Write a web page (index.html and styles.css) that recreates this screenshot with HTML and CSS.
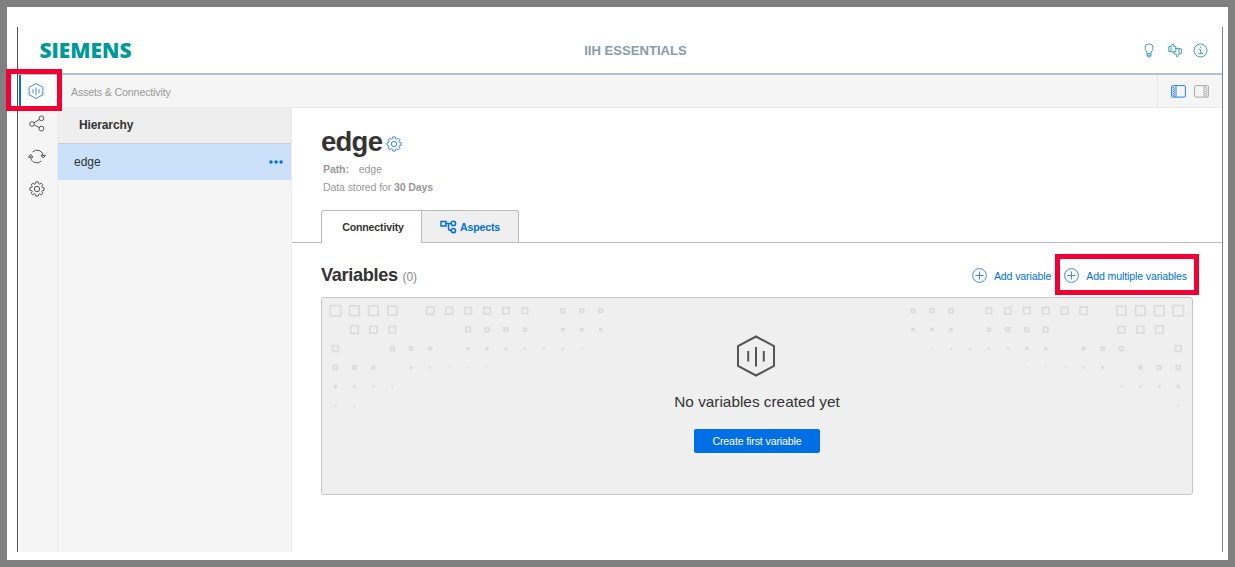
FILE: index.html
```html
<!DOCTYPE html>
<html lang="en">
<head>
<meta charset="utf-8">
<title>IIH Essentials</title>
<link rel="stylesheet" href="styles.css">
</head>
<body>
<svg class="defs" width="0" height="0" aria-hidden="true">
  <symbol id="hex" viewBox="0 0 40 42"><path d="M20 1.5 38 11.2V31L20 40.5 2 31V11.2Z"/><path d="M20 12V31.500M12.200 16V26.500M27.800 16V26.500"/></symbol>
  <symbol id="gear" viewBox="0 0 16 16"><path d="M6.400 2.700 6.800 .9H9.200L9.600 2.700 10.700 3.200 12.300 2.200 13.800 3.700 12.800 5.300 13.300 6.400 15.100 6.800V9.200L13.300 9.600 12.800 10.700 13.800 12.300 12.300 13.800 10.700 12.800 9.600 13.300 9.200 15.100H6.800L6.400 13.300 5.300 12.800 3.700 13.800 2.200 12.300 3.200 10.700 2.700 9.600 .9 9.200V6.800L2.700 6.400 3.200 5.300 2.200 3.700 3.700 2.200 5.300 3.200Z"/><circle cx="8" cy="8" r="2.700"/></symbol>
  <symbol id="plus" viewBox="0 0 15 15"><circle cx="7.500" cy="7.500" r="6.900"/><path d="M7.500 3.500V11.500M3.500 7.500H11.500"/></symbol>
</svg>
<div class="app">
  <header class="header">
    <svg class="brand" width="100" height="24" viewBox="0 0 100 24"><text x="0.500" y="19.500" textLength="92" lengthAdjust="spacingAndGlyphs">SIEMENS</text></svg>
    <h1 class="product">IIH ESSENTIALS</h1>
    <div class="tools">
      <svg width="10" height="15" viewBox="0 0 10 15"><path d="M3 10.500C3 8.500 1 7.500 1 4.800a4 4 0 0 1 8 0C9 7.500 7 8.500 7 10.500ZM3 10.500V12.500L4 14H6L7 12.500V10.500M3 12.300H7"/></svg>
      <svg width="14" height="15" viewBox="0 0 14 15"><path d="M.8 3.500H3L5 .8 6 1.500 5.600 3.600H7.800V8.500L3.500 9 2.800 8.500H.8ZM3 3.500V8.500M7.800 5.500 11 5.300 13.300 6V10.800H11.200L9.500 13.800 8.300 13.200V11H6.200L5.700 8.800M11 5.500V10.800"/></svg>
      <svg width="15" height="15" viewBox="0 0 15 15"><circle cx="7.500" cy="7.500" r="6.500"/><path d="M5.700 6.300H7.700V10.500M5.300 10.600H10M7.400 3.600V4.900"/></svg>
    </div>
  </header>
  <div class="body">
    <nav class="rail">
      <span class="rail-item active"><svg width="16" height="16"><use href="#hex"/></svg></span>
      <span class="rail-item"><svg width="16" height="17" viewBox="0 0 16 17"><circle cx="3" cy="9" r="2.300"/><circle cx="12.400" cy="3.300" r="2.400"/><circle cx="12.400" cy="13.600" r="2.400"/><path d="M5 7.800 10.300 4.500M5.200 9.800 10.200 12.600"/></svg></span>
      <span class="rail-item"><svg width="18" height="15" viewBox="0 0 18 15"><path d="M4.600 3A6.200 6.200 0 0 1 15.200 7M13.400 12A6.200 6.200 0 0 1 2.700 7.500"/><path class="solid" d="M13 6.300H17.500L15.200 9ZM.5 8.200H5L2.700 5.300Z"/></svg></span>
      <span class="rail-item"><svg width="16" height="16"><use href="#gear"/></svg></span>
    </nav>
    <div class="workspace">
      <div class="crumbs">
        <span class="crumb">Assets &amp; Connectivity</span>
        <div class="panes">
          <svg class="pane-on" width="15" height="13" viewBox="0 0 15 13"><rect x=".6" y=".6" width="13.800" height="11.500" rx="1"/><path d="M5 .6V12M1.500 2 4 3.500M1.500 4 4 5.500M1.500 6 4 7.500M1.500 8 4 9.500M1.500 10 4 11.500"/></svg>
          <svg class="pane-off" width="15" height="13" viewBox="0 0 15 13"><rect x=".6" y=".6" width="13.800" height="11.500" rx="1"/><path d="M10 .6V12M11 2 13.500 3.500M11 4 13.500 5.500M11 6 13.500 7.500M11 8 13.500 9.500M11 10 13.500 11.500"/></svg>
        </div>
      </div>
      <div class="columns">
        <aside class="tree">
          <h2 class="tree-title">Hierarchy</h2>
          <div class="tree-row"><span>edge</span><svg width="14" height="4" viewBox="0 0 14 4"><circle cx="2" cy="2" r="1.700"/><circle cx="7.100" cy="2" r="1.700"/><circle cx="12.100" cy="2" r="1.700"/></svg></div>
        </aside>
        <main class="main">
          <div class="asset"><h2 class="asset-name">edge</h2><svg width="16" height="16"><use href="#gear"/></svg></div>
          <p class="meta"><b>Path:</b><span class="path">edge</span></p>
          <p class="meta">Data stored for <b>30 Days</b></p>
          <div class="tabs">
            <div class="tab selected">Connectivity</div>
            <div class="tab"><svg width="17" height="14" viewBox="0 0 17 14"><path d="M1 1.500H6V6H1ZM6 3.500H11M8.500 3.500V8.500Q8.500 10.500 11 10.500"/><circle cx="13.400" cy="3.400" r="2.200"/><circle cx="13.400" cy="10.600" r="2.200"/></svg>Aspects</div>
          </div>
          <section class="variables">
            <div class="section-head">
              <h3 class="section-title">Variables <span class="count">(0)</span></h3>
              <div class="actions">
                <span class="action"><svg width="15" height="15"><use href="#plus"/></svg>Add variable</span>
                <span class="action"><svg width="15" height="15"><use href="#plus"/></svg>Add multiple variables</span>
              </div>
            </div>
            <div class="empty">
              <svg class="pattern" width="870" height="196" viewBox="322 298 870 196"><g id="dots"></g><use href="#dots" transform="translate(1513.800 0) scale(-1 1)"/></svg>
              <svg class="empty-icon" width="40" height="42"><use href="#hex"/></svg>
              <p class="empty-text">No variables created yet</p>
              <button class="primary">Create first variable</button>
            </div>
          </section>
        </main>
      </div>
    </div>
  </div>
</div>
<div class="mark mark-nav"></div>
<div class="mark mark-add"></div>
<script src="pattern.js"></script>
</body>
</html>
```
FILE: pattern.js
```js
// Square sizes by row; 0 leaves the cell empty.
const rows = [
  [12, 11.4, 11.2, 10.7, 0, 9, 8.4, 8.3, 8.2, 8, 7.2, 0, 5.4, 5.2, 5],
  [0, 9.2, 8.7, 8.2, 0, 0, 0, 6.2, 5.4, 5.2, 4.7, 0, 3.6, 3.6, 3.4],
  [7.4, 0, 0, 5.4, 4.7, 4.2, 0, 3.2, 3.2, 2.7, 2.3, 2.2, 2.1, 1.8],
  [5.4, 4.9, 4.2, 0, 2.7, 2, 1.3, 1.2, 1.1],
  [3.2, 2.6, 2.2, 1.7, 0, 0, 0.8],
  [1.7, 1.2, 0.9]
];
const dots = document.getElementById("dots");
rows.forEach((row, r) => row.forEach((size, c) => {
  if (!size) return;
  const rect = document.createElementNS("http://www.w3.org/2000/svg", "rect");
  const stroke = Math.min(1.7, size / 2);
  const side = size - stroke;
  rect.setAttribute("x", 335.5 + c * 18.94 - side / 2);
  rect.setAttribute("y", 310.7 + r * 18.94 - side / 2);
  rect.setAttribute("width", side);
  rect.setAttribute("height", side);
  rect.setAttribute("stroke-width", stroke);
  dots.appendChild(rect);
}));
```
FILE: styles.css
```css
* { box-sizing: border-box; }
body {
  margin: 0;
  height: 567px;
  overflow: hidden;
  padding: 20px 5px 8px 10px;
  border: 7px solid #808080;
  background: #fff;
  font-family: "Liberation Sans", Arial, sans-serif;
  font-size: 10.6px;
  letter-spacing: -.13px;
  color: #333;
}
h1, h2, h3, p { margin: 0; }
svg { display: block; flex: none; fill: none; stroke: currentColor; }
.defs { position: absolute; }
.app {
  width: 1206px;
  height: 525px;
  display: flex;
  flex-direction: column;
  border-left: 1px solid #574d4e;
  border-right: 1px solid #858585;
}
.header {
  height: 48px;
  flex: none;
  display: grid;
  grid-template-columns: 1fr auto 1fr;
  align-items: center;
  padding: 0 14px 0 21px;
  border-bottom: 2px solid #b3c2cb;
}
.brand { overflow: visible; fill: #009999; stroke: none; letter-spacing: 0; }
.brand text { font: 800 20.5px "Open Sans", "Noto Sans", sans-serif; }
.product { font-size: 13.1px; line-height: 18px; letter-spacing: 0; color: #879baa; transform: translate(12px, .5px); }
.tools { display: flex; gap: 12px; justify-content: flex-end; align-items: center; color: #3c9dba; }
.tools svg:nth-child(2) { margin: 0 -1px 0 2px; }
.body { flex: 1; display: flex; min-height: 0; }
.rail { width: 38px; margin-left: 1px; background: #f5f5f5; color: #555; }
.rail-item { height: 33px; display: flex; align-items: center; padding-left: 10px; }
.rail-item svg { overflow: visible; }
.rail-item:nth-child(3) svg { margin-left: -1px; }
.rail-item:nth-child(4) { height: 32px; }
.rail-item.active { height: 32px; padding: 0 0 1px 7px; border-left: 2px solid #006fe6; background: #fff; color: #3b87e8; }
.rail-item.active svg { stroke-width: 2.6; }
.workspace { flex: 1; display: flex; flex-direction: column; min-width: 0; }
.crumbs { height: 33px; flex: none; display: flex; justify-content: space-between; background: #f5f5f5; border-bottom: 1px solid #ebebeb; }
.crumb { padding-left: 14px; line-height: 34px; color: #999; }
.panes { width: 65px; padding-left: 13px; display: flex; align-items: center; gap: 8px; border-left: 1px solid #e5e5e5; }
.pane-on { color: #2381f0; }
.pane-off { color: #aaa; }
.columns { flex: 1; display: flex; min-height: 0; }
.tree { width: 235px; background: #f5f5f5; border-left: 1px solid #ebebeb; border-right: 1px solid #ececec; }
.tree-title { height: 36px; padding-left: 21px; border-bottom: 1px solid #ccc; background: #eee; font-size: 12px; line-height: 34px; }
.tree-row { height: 36px; padding: 0 8px 0 16px; display: flex; align-items: center; justify-content: space-between; background: #cbe0f9; font-size: 12px; letter-spacing: 0; }
.tree-row svg { fill: #006fe6; stroke: none; }
.main { flex: 1; min-width: 0; }
.asset { height: 53px; padding: 14px 0 0 29px; display: flex; gap: 4px; color: #3d8bea; }
.asset-name { height: 38px; font-size: 27.5px; line-height: 39px; letter-spacing: -.75px; color: #333; }
.asset svg { margin-top: 14px; }
.meta { padding-left: 31px; line-height: 17.500px; color: #999; }
.path { margin-left: 10px; }
.tabs { height: 33px; margin-top: 14px; padding-left: 29px; display: flex; border-bottom: 1px solid #bbb; }
.tab {
  width: 97px;
  height: 32px;
  display: flex;
  align-items: center;
  justify-content: center;
  gap: 3px;
  border: 1px solid #bbb;
  border-bottom: 0;
  border-left: 0;
  border-radius: 0 3px 0 0;
  background: #efefef;
  font-weight: bold;
  letter-spacing: -.17px;
  color: #006fe6;
}
.tab svg { stroke-width: 1.5; }
.tab.selected { width: 101px; height: 33px; padding: 0 0 1px 3px; border-left: 1px solid #bbb; border-radius: 3px 0 0 0; background: #fff; color: #333; }
.variables { padding: 0 29px; }
.section-head { height: 54px; padding-top: 11px; display: flex; justify-content: space-between; align-items: center; }
.section-title { font-size: 18.200px; line-height: 24px; letter-spacing: -.35px; }
.count { font-size: 12px; font-weight: normal; letter-spacing: 0; color: #888; }
.actions { display: flex; gap: 13px; padding-right: 6px; color: #006fe6; }
.action { display: flex; align-items: center; gap: 7px; }
.action svg { opacity: .8; }
.empty {
  position: relative;
  height: 198px;
  display: flex;
  flex-direction: column;
  align-items: center;
  padding-top: 37px;
  border: 1px solid #c8c8c8;
  border-radius: 3px;
  background: #efefef;
}
.pattern { position: absolute; left: 0; top: 0; stroke: #dcdcdc; }
.empty-icon { color: #555; stroke-width: 2; margin-right: 2px; }
.empty-text { margin-top: 15px; font-size: 15.35px; line-height: 20px; letter-spacing: 0; }
.primary { width: 126px; height: 24px; margin-top: 17px; padding: 0; border: 0; border-radius: 2px; background: #006fe6; color: #fff; font: 10.600px "Liberation Sans", Arial, sans-serif; letter-spacing: -.13px; }
.mark { position: absolute; border: 5px solid #f20034; }
.mark-nav { left: 6px; top: 69px; width: 56px; height: 42px; }
.mark-add { left: 1055px; top: 254px; width: 144px; height: 41px; }
```
